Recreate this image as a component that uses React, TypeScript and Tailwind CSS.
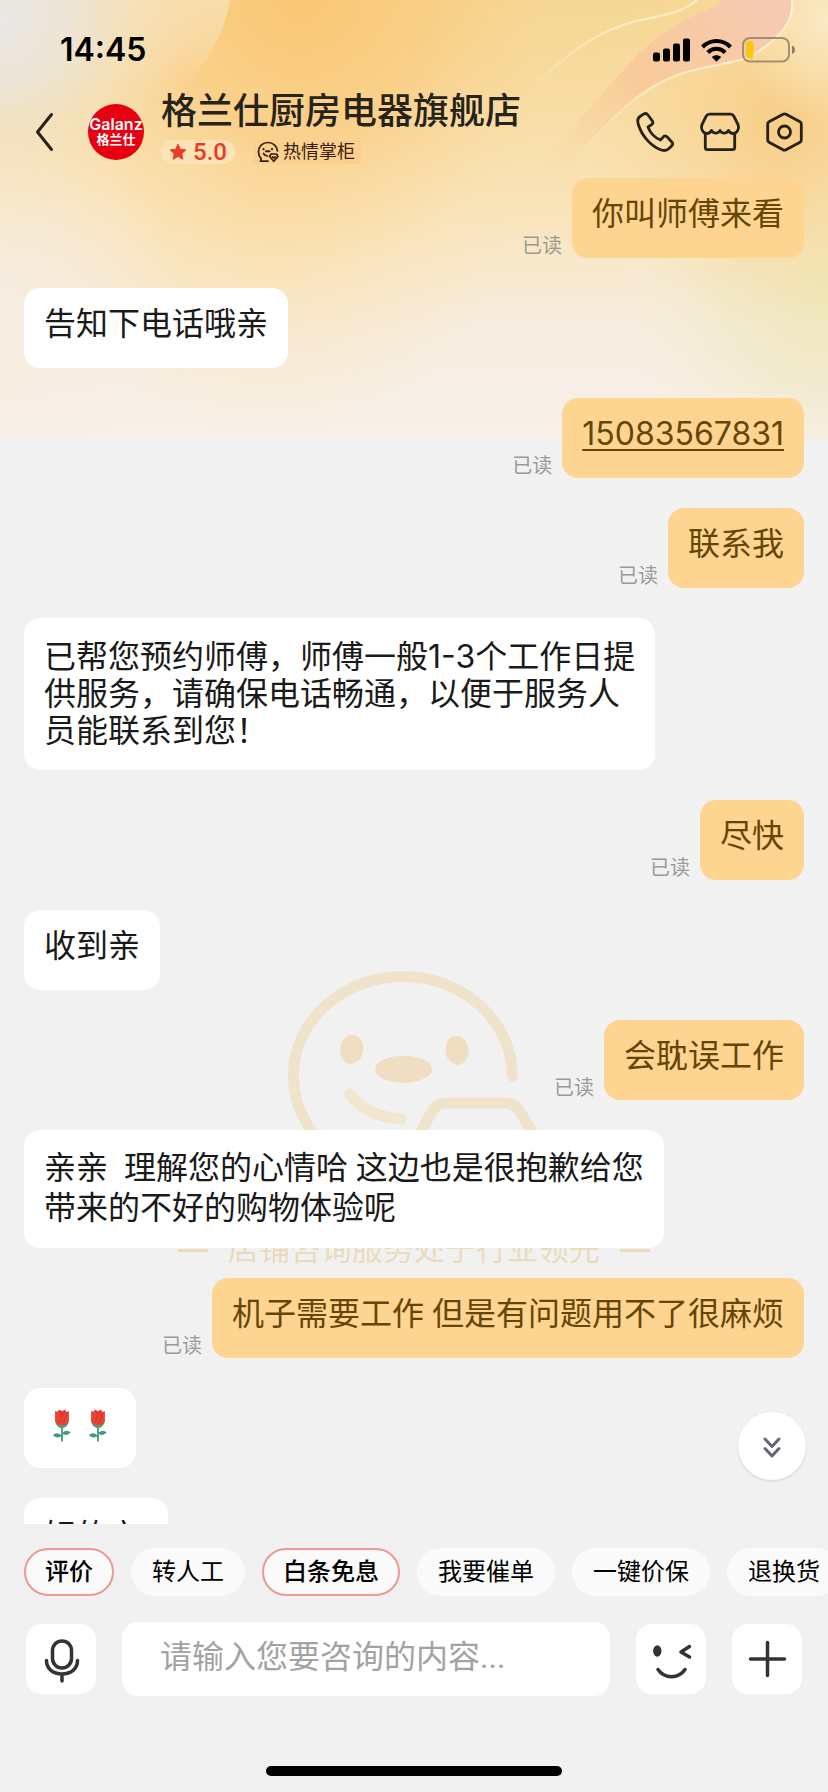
type Message = {
  id: number;
  mine?: boolean;
  text: string;
  phone?: boolean;
  roses?: number;
  size?: "normal" | "long" | "loose";
};

const messages: Message[] = [
  { id: 1, mine: true, text: "你叫师傅来看" },
  { id: 2, text: "告知下电话哦亲" },
  { id: 3, mine: true, text: "15083567831", phone: true },
  { id: 4, mine: true, text: "联系我" },
  { id: 5, text: "已帮您预约师傅，师傅一般1-3个工作日提\n供服务，请确保电话畅通，以便于服务人\n员能联系到您！", size: "long" },
  { id: 6, mine: true, text: "尽快" },
  { id: 7, text: "收到亲" },
  { id: 8, mine: true, text: "会耽误工作" },
  { id: 9, text: "亲亲  理解您的心情哈 这边也是很抱歉给您\n带来的不好的购物体验呢", size: "loose" },
  { id: 10, mine: true, text: "机子需要工作 但是有问题用不了很麻烦" },
  { id: 11, text: "", roses: 2 },
  { id: 12, text: "好的亲 ", size: "loose" },
];

const bubbleSizes = {
  normal: "pt-[18px] pb-[26px] leading-9",
  long: "pt-5 pb-[21px] leading-[37px] font-['Inter','Noto_Sans_CJK_SC',sans-serif]",
  loose: "pt-[18px] pb-5 leading-10",
};

const shortcuts = [
  { label: "评价", hot: true },
  { label: "转人工" },
  { label: "白条免息", hot: true },
  { label: "我要催单" },
  { label: "一键价保" },
  { label: "退换货" },
];

function HeaderBackdrop() {
  return (
    <svg
      className="absolute inset-x-0 top-0 h-[440px] w-full"
      viewBox="0 0 828 440"
      preserveAspectRatio="none"
      aria-hidden="true"
    >
      <defs>
        <linearGradient id="base" x1="0" y1="0" x2="0" y2="1">
          <stop offset="0" stopColor="#f5d793" />
          <stop offset="0.22" stopColor="#f8dca1" />
          <stop offset="0.5" stopColor="#f9e5bd" />
          <stop offset="0.75" stopColor="#f7ede0" />
          <stop offset="1" stopColor="#f7f1ea" />
        </linearGradient>
        <radialGradient id="grey" gradientUnits="userSpaceOnUse" cx="0" cy="20" r="190">
          <stop offset="0" stopColor="#eae8e6" />
          <stop offset="0.35" stopColor="#ebe6dc" stopOpacity="0.85" />
          <stop offset="1" stopColor="#f5e3c0" stopOpacity="0" />
        </radialGradient>
        <radialGradient id="orange" gradientUnits="userSpaceOnUse" cx="300" cy="0" r="270">
          <stop offset="0" stopColor="#fac673" />
          <stop offset="0.5" stopColor="#facb7f" stopOpacity="0.7" />
          <stop offset="1" stopColor="#f9d797" stopOpacity="0" />
        </radialGradient>
        <radialGradient id="warm" gradientUnits="userSpaceOnUse" cx="270" cy="190" r="250">
          <stop offset="0" stopColor="#fbdfab" stopOpacity="0.9" />
          <stop offset="1" stopColor="#fbe3b6" stopOpacity="0" />
        </radialGradient>
        <radialGradient id="amber" gradientUnits="userSpaceOnUse" cx="780" cy="125" r="200">
          <stop offset="0" stopColor="#f8cd85" />
          <stop offset="0.5" stopColor="#f9d595" stopOpacity="0.6" />
          <stop offset="1" stopColor="#f8dca6" stopOpacity="0" />
        </radialGradient>
        <radialGradient id="lime" gradientUnits="userSpaceOnUse" cx="828" cy="285" r="210">
          <stop offset="0" stopColor="#efe7b7" />
          <stop offset="0.5" stopColor="#f1e9c6" stopOpacity="0.7" />
          <stop offset="1" stopColor="#f5ecd8" stopOpacity="0" />
        </radialGradient>
        <radialGradient id="corner" gradientUnits="userSpaceOnUse" cx="828" cy="20" r="100">
          <stop offset="0" stopColor="#faeac6" />
          <stop offset="1" stopColor="#fae8c0" stopOpacity="0" />
        </radialGradient>
        <radialGradient id="pale" gradientUnits="userSpaceOnUse" cx="0" cy="300" r="180">
          <stop offset="0" stopColor="#f6ece0" />
          <stop offset="1" stopColor="#f6ece0" stopOpacity="0" />
        </radialGradient>
        <linearGradient id="sheet" gradientUnits="userSpaceOnUse" x1="150" y1="0" x2="170" y2="100">
          <stop offset="0" stopColor="#f8deae" />
          <stop offset="0.5" stopColor="#f8deae" stopOpacity="0.7" />
          <stop offset="1" stopColor="#f9dca6" stopOpacity="0" />
        </linearGradient>
        <linearGradient id="ribbon" gradientUnits="userSpaceOnUse" x1="760" y1="0" x2="560" y2="190">
          <stop offset="0" stopColor="#f6cbb2" />
          <stop offset="0.5" stopColor="#f8c898" stopOpacity="0.9" />
          <stop offset="1" stopColor="#f9d79c" stopOpacity="0" />
        </linearGradient>
        <linearGradient id="edge" gradientUnits="userSpaceOnUse" x1="760" y1="0" x2="570" y2="150">
          <stop offset="0" stopColor="#fdf0d0" />
          <stop offset="0.6" stopColor="#fdeecb" stopOpacity="0.8" />
          <stop offset="1" stopColor="#fdeecb" stopOpacity="0" />
        </linearGradient>
      </defs>
      <rect width="828" height="440" fill="url(#base)" />
      <rect width="828" height="440" fill="url(#warm)" />
      <rect width="828" height="440" fill="url(#orange)" />
      <path d="M0 0H230C224 36 205 68 180 88L120 110H0Z" fill="url(#sheet)" />
      <rect width="828" height="440" fill="url(#grey)" />
      <rect width="828" height="440" fill="url(#pale)" />
      <rect width="828" height="440" fill="url(#lime)" />
      <rect width="828" height="440" fill="url(#amber)" />
      <rect width="828" height="440" fill="url(#corner)" />
      <path
        d="M724 0C705 13 682 18 660 36C630 58 600 98 548 155L540 215C555 190 570 160 590 141C625 104 645 84 680 74C710 64 735 64 752 56C782 36 794 22 792 0Z"
        fill="url(#ribbon)"
      />
      <path d="M697 0C680 14 660 16 640 20C590 32 565 58 526 92" fill="none" stroke="url(#edge)" strokeWidth="2" />
      <path
        d="M792 0C794 22 782 36 752 56C735 64 710 64 680 74C645 86 620 110 584 148"
        fill="none"
        stroke="url(#edge)"
        strokeWidth="2"
      />
    </svg>
  );
}

function StatusBar() {
  return (
    <div className="flex h-[88px] items-center justify-between pt-3 pl-[60px] pr-8">
      <span className="font-['Inter',sans-serif] text-[32px] leading-9 font-semibold text-black">14:45</span>
      <div className="flex items-center gap-[10px]">
        <svg className="h-6 w-[38px]" viewBox="0 0 38 24" fill="#000" aria-hidden="true">
          <rect x="0" y="14.5" width="7" height="9" rx="2" />
          <rect x="10" y="10.5" width="7" height="13" rx="2" />
          <rect x="20" y="5.5" width="7" height="18" rx="2" />
          <rect x="30" y="0.5" width="7" height="23" rx="2" />
        </svg>
        <svg className="h-6 w-[31px]" viewBox="0 0 31 24" fill="none" stroke="#000" strokeWidth="4" aria-hidden="true">
          <path d="M1.5 9C9.5 1 21.5 1 29.5 9" />
          <path d="M6.8 14.5C11.8 9.6 19.2 9.6 24.2 14.5" />
          <path d="M15.5 23.8L10.8 19C13.5 16.7 17.5 16.7 20.2 19Z" fill="#000" stroke="none" />
        </svg>
        <svg className="h-[26px] w-[54px]" viewBox="0 0 54 26" aria-hidden="true">
          <rect x="1" y="1" width="46" height="23.5" rx="7" fill="none" stroke="#8f7d62" strokeOpacity="0.8" strokeWidth="2" />
          <rect x="4" y="4" width="7.5" height="17.5" rx="3" fill="#fdc80b" />
          <path d="M50 8.5C52 9.5 53 11 53 12.8S52 16.2 50 17Z" fill="#8f7d62" />
        </svg>
      </div>
    </div>
  );
}

function Header() {
  return (
    <header className="relative pb-0.5">
      <StatusBar />
      <div className="flex h-[88px] items-center pl-[34px] pr-[25px]">
        <button type="button" aria-label="返回" className="mr-8">
          <svg className="h-10 w-[22px]" viewBox="0 0 22 40" fill="none" stroke="#26221a" strokeWidth="3" strokeLinecap="round" strokeLinejoin="round">
            <path d="M17.5 2.5L3.5 20L17.5 37.5" />
          </svg>
        </button>
        <div className="mr-[17px] flex size-14 shrink-0 flex-col items-center justify-center rounded-full bg-[#e60012] text-white">
          <span className="font-['Inter',sans-serif] text-base leading-4 font-semibold">Galanz</span>
          <span className="text-[13px] leading-4 font-bold">格兰仕</span>
        </div>
        <div className="min-w-0 flex-1 pb-2">
          <h1 className="truncate text-4xl leading-10 font-medium text-[#26231b]">格兰仕厨房电器旗舰店</h1>
          <div className="mt-2 flex items-center gap-[18px]">
            <span className="flex h-6 items-center gap-[6px] rounded-full bg-[#fbe3b6] px-2 font-['Roboto',sans-serif] text-2xl leading-6 font-medium text-[#ea3a28]">
              <svg className="size-[18px]" viewBox="0 0 18 18" fill="#ea3a28" stroke="#ea3a28" strokeLinejoin="round" aria-hidden="true">
                <path d="M9 1.2L11.3 6.3L16.9 6.9L12.7 10.7L13.9 16.2L9 13.4L4.1 16.2L5.3 10.7L1.1 6.9L6.7 6.3Z" />
              </svg>
              5.0
            </span>
            <span className="flex h-6 items-center gap-1 rounded bg-[#fad08e] pl-1 pr-[6px] text-lg leading-6 text-[#3b1d10]">
              <svg className="size-[22px]" viewBox="0 0 22 22" fill="none" stroke="#3b1d10" strokeWidth="1.7" strokeLinecap="round" strokeLinejoin="round" aria-hidden="true">
                <path d="M20.5 10C20 5 16 1.5 11 1.5C5.5 1.5 1.5 5.5 1.5 11C1.5 13.5 2.5 16 4.2 17.8L3.5 20.2H11" />
                <path d="M6.5 8V8.2M15 8V8.2" strokeWidth="2.2" />
                <path d="M9 10.2H12.5" strokeWidth="2" />
                <path d="M6.5 12.5C7.5 14.2 9 15 10.5 15" />
                <path d="M14 13H19.5L21 15.5L16.8 20.3L12.6 15.5ZM15.5 15.8L16.8 17L18.2 15.8" />
              </svg>
              热情掌柜
            </span>
          </div>
        </div>
        <div className="flex items-center gap-[26px]">
          <button type="button" aria-label="电话">
            <svg className="h-10 w-[38px]" viewBox="0 0 38 40" fill="none" stroke="#26221a" strokeWidth="2.8" strokeLinejoin="round">
              <path d="M7.5 2.2L4 4.5C1 6.5 1.5 10 2.5 13C6 24 14.5 33.5 24 37.5C27.5 39 30.5 39 33 36.5L35.8 33.7C37 32.5 37 31.2 35.8 30L31 24.8C29.8 23.6 28.6 23.5 27.6 24.6L24.5 28C19 26 14 20.5 12 15L15.8 12.5C17 11.6 17.2 10.4 16.4 9L12 3C10.8 1.5 9.2 1.1 7.5 2.2Z" />
            </svg>
          </button>
          <button type="button" aria-label="店铺">
            <svg className="size-10" viewBox="0 0 40 40" fill="none" stroke="#26221a" strokeWidth="2.8" strokeLinejoin="round">
              <path d="M9.5 2.2H30.5Q32.8 2.2 33.8 4.2L38 12.5C39.5 17 37 21.5 33.3 21.5C31 21.5 29.5 20.5 28.5 18.5C26.5 22 21.5 22 20 18.5C18.5 22 13.5 22 11.5 18.5C10.5 20.5 9 21.5 6.7 21.5C3 21.5 0.5 17 2 12.5L6.2 4.2Q7.2 2.2 9.5 2.2Z" />
              <path d="M5.3 21.5V35.5Q5.3 37.7 7.5 37.7H32.5Q34.7 37.7 34.7 35.5V21.5" />
            </svg>
          </button>
          <button type="button" aria-label="设置">
            <svg className="h-10 w-[37px]" viewBox="0 0 37 40" fill="none" stroke="#26221a" strokeWidth="2.8" strokeLinejoin="round">
              <path d="M17 2.3Q18.5 1.5 20 2.3L34 9.8Q35.3 10.5 35.3 12V28Q35.3 29.5 34 30.2L20 37.7Q18.5 38.5 17 37.7L3 30.2Q1.7 29.5 1.7 28V12Q1.7 10.5 3 9.8Z" />
              <circle cx="18.5" cy="20" r="6" />
            </svg>
          </button>
        </div>
      </div>
    </header>
  );
}

function Watermark() {
  return (
    <div className="absolute inset-x-0 top-[940px] flex flex-col items-center" aria-hidden="true">
      <svg className="h-60 w-[348px]" viewBox="0 0 348 240" fill="none">
        <g stroke="#efe3cb" strokeWidth="11" strokeLinecap="round" strokeLinejoin="round">
          <path d="M272.5 136C272 80 222 36.5 163 36.5S53.5 80 53.5 135C53.5 158 60 175 76 198" />
          <path d="M109.5 154C120 169 140 178 161 179" stroke="#f1e6cf" />
          <path d="M178 198L191 173Q196 163 207 163H264Q275 163 281 173L297 200" />
        </g>
        <g fill="#efdec1">
          <ellipse cx="111.7" cy="109.3" rx="11.5" ry="14.5" transform="rotate(8 111.7 109.3)" />
          <ellipse cx="217" cy="110.3" rx="11.5" ry="14.5" transform="rotate(-8 217 110.3)" />
          <ellipse cx="163.5" cy="129.3" rx="28.5" ry="13.5" />
        </g>
      </svg>
      <div className="mt-[52px] flex items-center gap-5 text-[31px] leading-9 text-[#ecdbb9]">
        <span className="h-[3px] w-[30px] bg-[#ecdbb9]" />
        店铺咨询服务处于行业领先
        <span className="h-[3px] w-[30px] bg-[#ecdbb9]" />
      </div>
    </div>
  );
}

function Rose() {
  return (
    <svg className="size-9" viewBox="0 0 36 36" role="img" aria-label="玫瑰">
      <path d="M18 18V35.5" stroke="#3f9b7c" strokeWidth="1.8" />
      <path d="M18 30C14 26 11 27 9 29.5C12 32 15.5 32 18 30ZM18 27.5C21 23.5 24.5 24.5 26.5 26.5C24 29.5 20.5 29.5 18 27.5Z" fill="#3f9b7c" />
      <path d="M11 14C11.5 19.5 14.5 22 18 22S24.5 19.5 25 14L18 17Z" fill="#4aa583" />
      <path d="M11 5L13.5 5.8L15 3.8L18 5L21 3.8L22.5 6L25 5C24.5 9 25.5 13 24.5 16C23.5 18.5 21 19.5 18 19.5S12.5 18.5 11.5 16C10.5 13 11.5 9 11 5Z" fill="#ea4335" />
      <path d="M15 4.5L18 9L21 4.5M18 9L15.5 16M22.5 7L19.5 17" fill="none" stroke="#c92f26" strokeWidth="0.8" />
    </svg>
  );
}

function Bubble({ message }: { message: Message }) {
  const { mine, text, phone, roses, size = "normal" } = message;

  return (
    <li className={mine ? "flex items-end justify-end gap-[10px]" : "flex"}>
      {mine && <span className="shrink-0 text-xl leading-6 text-[#9c9a98]">已读</span>}
      <div
        className={`max-w-[84%] whitespace-pre-wrap rounded-2xl px-5 text-[32px] ${bubbleSizes[size]} ${
          mine ? "bg-[#fdd590] text-[#674508]" : "bg-white text-[#1a1a1a]"
        }`}
      >
        {phone && (
          <a href={`tel:${text}`} className="font-['Inter',sans-serif] underline decoration-2 underline-offset-4">
            {text}
          </a>
        )}
        {roses && (
          <span className="flex">
            {Array.from({ length: roses }, (_, i) => (
              <Rose key={i} />
            ))}
          </span>
        )}
        {!phone && !roses && text}
      </div>
    </li>
  );
}

function Composer() {
  return (
    <form className="mt-[26px] flex items-center gap-[26px] px-[26px]" onSubmit={e => e.preventDefault()}>
      <button type="button" aria-label="语音" className="size-[70px] shrink-0 rounded-2xl bg-white">
        <svg viewBox="0 0 70 70" fill="none" stroke="#333" strokeWidth="3.5" strokeLinecap="round">
          <rect x="26.5" y="17" width="19" height="27" rx="9.5" />
          <path d="M20.5 36.5C20.5 45 27 50 36 50S51.5 45 51.5 36.5M36 50V57" />
        </svg>
      </button>
      <input
        type="text"
        aria-label="消息"
        placeholder="请输入您要咨询的内容..."
        className="h-[74px] min-w-0 flex-1 rounded-2xl bg-white pb-1 pl-[38px] pr-4 text-[32px] text-[#1a1a1a] outline-none placeholder:text-[#a3a3a3]"
      />
      <button type="button" aria-label="表情" className="size-[70px] shrink-0 rounded-2xl bg-white">
        <svg viewBox="0 0 70 70" fill="none" stroke="#333" strokeWidth="3.5" strokeLinecap="round" strokeLinejoin="round">
          <ellipse cx="21.3" cy="27" rx="4.2" ry="5.7" fill="#333" stroke="none" />
          <path d="M53.5 22.5L45 28L53.5 33" />
          <path d="M22 45.5C28.5 55 42.5 55 49 45.5" />
        </svg>
      </button>
      <button type="button" aria-label="更多" className="size-[70px] shrink-0 rounded-2xl bg-white">
        <svg viewBox="0 0 70 70" fill="none" stroke="#333" strokeWidth="3.5" strokeLinecap="round">
          <path d="M35.5 18.5V51.5M18.5 35H52.5" />
        </svg>
      </button>
    </form>
  );
}

export default function App() {
  return (
    <div className="relative flex h-screen flex-col overflow-hidden bg-[#f1f1f1] font-['Roboto','Noto_Sans_CJK_SC',sans-serif]">
      <HeaderBackdrop />
      <Watermark />
      <Header />

      <div className="relative flex min-h-0 flex-1 flex-col">
        <main className="min-h-0 flex-1 overflow-y-auto [scrollbar-width:none]">
          <ul className="flex flex-col gap-[30px] px-6">
            {messages.map(message => (
              <Bubble key={message.id} message={message} />
            ))}
          </ul>
        </main>
        <button
          type="button"
          aria-label="回到底部"
          className="absolute right-[22px] bottom-11 flex size-[68px] items-center justify-center rounded-full bg-white shadow"
        >
          <svg className="mt-1 size-6" viewBox="0 0 24 24" fill="none" stroke="#66647c" strokeWidth="3" strokeLinecap="round" strokeLinejoin="round">
            <path d="M5 3L12 10.5L19 3M5 12.5L12 20L19 12.5" />
          </svg>
        </button>
      </div>

      <footer className="shrink-0 pt-6 pb-4">
        <div className="flex gap-[17px] overflow-hidden pl-6">
          {shortcuts.map(({ label, hot }) => (
            <button
              key={label}
              type="button"
              className={`h-12 shrink-0 rounded-full border-2 bg-[#fafafa] px-[19px] text-2xl leading-8 text-black ${
                hot ? "border-[#ec9a90] font-medium" : "border-transparent"
              }`}
            >
              {label}
            </button>
          ))}
        </div>
        <Composer />
        <div className="mx-auto mt-[70px] h-[10px] w-[296px] rounded-full bg-black" />
      </footer>
    </div>
  );
}
